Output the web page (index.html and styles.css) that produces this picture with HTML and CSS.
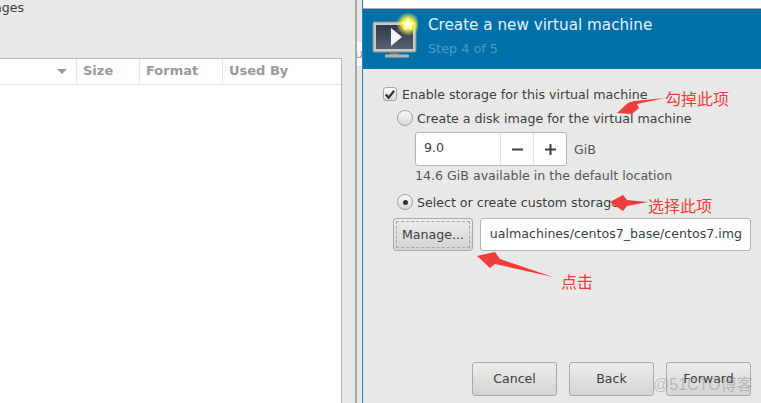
FILE: index.html
```html
<!DOCTYPE html>
<html lang="en">
<head>
    <meta charset="UTF-8">
    <title>Create a new virtual machine</title>
    <link rel="stylesheet" href="styles.css">
</head>
<body>
    <div class="screen">
        <!-- Storage volumes panel behind the dialog -->
        <div class="volumes">
            <div class="volumes-title">Images</div>
            <div class="table">
                <div class="table-head">
                    <div class="col col-name"><span class="sort-arrow"></span></div>
                    <div class="col col-size">Size</div>
                    <div class="col col-format">Format</div>
                    <div class="col col-used">Used By</div>
                </div>
            </div>
        </div>

        <div class="gap-strip">
            <div class="gap-cell">u</div>
        </div>

        <div class="dialog">
            <div class="dialog-top"></div>
            <div class="banner">
                <svg class="banner-icon" width="46" height="46" viewBox="0 0 46 46">
                    <defs>
                        <radialGradient id="glow">
                            <stop offset="0.45" stop-color="#f4f04a"/>
                            <stop offset="1" stop-color="#f4f04a" stop-opacity="0"/>
                        </radialGradient>
                        <linearGradient id="screenFill" x1="0" y1="0" x2="0" y2="1">
                            <stop offset="0" stop-color="#2f3a4b"/>
                            <stop offset="1" stop-color="#56606e"/>
                        </linearGradient>
                    </defs>
                    <rect x="1" y="10" width="43" height="30" rx="1.5" fill="#c9c9c6" stroke="#8f8f8c"/>
                    <rect x="4" y="13" width="37" height="24" fill="url(#screenFill)"/>
                    <path d="M19 16 L30 25 L19 34 Z" fill="#f4f4f2"/>
                    <rect x="18" y="40" width="9" height="3" fill="#777"/>
                    <rect x="13" y="42.5" width="24" height="3" rx="1" fill="#b5b5b2"/>
                    <circle cx="36" cy="12" r="12" fill="url(#glow)"/>
                    <path d="M36 5.5 L38 10 L42.6 10.5 L39.2 13.6 L40.2 18.2 L36 15.8 L31.8 18.2 L32.8 13.6 L29.4 10.5 L34 10 Z" fill="#fdfbd0"/>
                </svg>
                <div class="banner-text">
                    <div class="banner-title">Create a new virtual machine</div>
                    <div class="banner-step">Step 4 of 5</div>
                </div>
            </div>

            <div class="body">
                <label class="check-row">
                    <span class="checkbox">
                        <svg width="13" height="13" viewBox="0 0 13 13"><path d="M2 6.5 L5 10 L11 2.5" fill="none" stroke="#2e3436" stroke-width="2.4"/></svg>
                    </span>
                    Enable storage for this virtual machine
                </label>

                <div class="radio-row">
                    <span class="radio"></span>
                    Create a disk image for the virtual machine
                </div>

                <div class="size-row">
                    <div class="spin">
                        <div class="spin-value">9.0</div>
                        <div class="spin-btn">
                            <svg width="13" height="13" viewBox="0 0 13 13"><rect x="1" y="5.5" width="11" height="2" fill="#3a3f40"/></svg>
                        </div>
                        <div class="spin-btn">
                            <svg width="13" height="13" viewBox="0 0 13 13"><path d="M1 5.5h4.5V1h2v4.5H12v2H7.5V12h-2V7.5H1z" fill="#3a3f40"/></svg>
                        </div>
                    </div>
                    <span class="unit">GiB</span>
                </div>
                <div class="hint">14.6 GiB available in the default location</div>

                <div class="radio-row radio-row-custom">
                    <span class="radio radio-on"></span>
                    Select or create custom storage
                </div>

                <div class="path-row">
                    <button class="btn btn-manage"><span class="btn-focus">Manage...</span></button>
                    <div class="path-input">
                        <div class="path-clip"><span class="path-text">/var/lib/libvirt/images/virtualmachines/centos7_base/centos7.img</span></div>
                    </div>
                </div>
            </div>

            <div class="actions">
                <button class="btn">Cancel</button>
                <button class="btn">Back</button>
                <button class="btn">Forward</button>
            </div>
        </div>

        <!-- Hand drawn notes on top of the screenshot -->
        <svg class="arrows" width="761" height="403" viewBox="0 0 761 403">
            <path d="M665 98 L637 104 L639 108 L632 114 L617 113 L628 103 L634 101 Z" fill="#f03c3c"/>
            <path d="M648 202 L627 200 L623 195 L610 202 L623 211 L627 206 Z" fill="#f03c3c"/>
            <path d="M553 277 L500 259 L495 252 L477 256 L490 268 L495 264 Z" fill="#f03c3c"/>
        </svg>
        <div class="note note-uncheck">勾掉此项</div>
        <div class="note note-select">选择此项</div>
        <div class="note note-click">点击</div>
        <div class="watermark">@51CTO博客</div>
    </div>
</body>
</html>
```

FILE: styles.css
```css
/* General */
body {
    margin: 0;
    font-family: "DejaVu Sans", sans-serif;
    font-size: 12.6px;
    color: #3a3f41;
    background-color: #e8e8e7;
}

.screen {
    position: relative;
    display: flex;
    width: 761px;
    height: 403px;
    overflow: hidden;
}

/* Panel on the left */
.volumes {
    box-sizing: border-box;
    border-right: 2px solid #a9a9a7;
    width: 357px;
    height: 403px;
    padding-right: 13px;
    overflow: hidden;
    flex: none;
}

.volumes-title {
    margin-left: -22px;
    height: 58px;
    line-height: 14px;
    padding-top: 1px;
    box-sizing: border-box;
}

.table {
    height: 345px;
    background: white;
    border-top: 1px solid #b6b6b4;
    border-right: 1px solid #b6b6b4;
    box-sizing: border-box;
}

.table-head {
    display: flex;
    height: 25px;
    border-bottom: 1px solid #e3e3e2;
    color: #999;
    font-weight: bold;
    font-size: 13px;
    line-height: 24px;
}

.col {
    box-sizing: border-box;
    border-right: 1px solid #e8e8e7;
    padding-left: 6px;
}

.col-name {
    width: 77px;
    display: flex;
    justify-content: flex-end;
    align-items: center;
    padding-right: 9px;
}

.col-size {
    width: 63px;
}

.col-format {
    width: 83px;
}

.col-used {
    flex: 1;
    border-right: none;
}

.sort-arrow {
    width: 0;
    height: 0;
    border-left: 5px solid transparent;
    border-right: 5px solid transparent;
    border-top: 5px solid #999;
}

/* Strip between the panel and the dialog */
.gap-strip {
    width: 5px;
    flex: none;
    padding-top: 42px;
    border-right: 1px solid #1f86d6;
    overflow: hidden;
}

.gap-cell {
    height: 24px;
    background: white;
    border-bottom: 1px solid #e3e3e2;
    color: #999;
    line-height: 24px;
    margin-left: -7px;
    padding-left: 5px;
}

/* Dialog */
.dialog {
    flex: 1;
    display: flex;
    flex-direction: column;
    min-width: 0;
}

.dialog-top {
    height: 8px;
    background: white;
    border-bottom: 1px solid #b0b0ae;
}

.banner {
    display: flex;
    height: 60px;
    background-color: #0070a8;
    padding-left: 9px;
    padding-top: 3px;
    box-sizing: border-box;
    flex: none;
}

.banner-icon {
    flex: none;
}

.banner-text {
    margin-left: 10px;
    margin-top: 4px;
}

.banner-title {
    font-size: 15.2px;
    line-height: 18px;
    color: #e8f1f6;
}

.banner-step {
    margin-top: 7px;
    font-size: 12.8px;
    line-height: 16px;
    color: #4f9ccb;
}

.body {
    flex: 1;
    padding: 16px 10px 0 20px;
}

.check-row {
    display: flex;
    align-items: center;
    gap: 5px;
    height: 18px;
}

.checkbox {
    width: 14px;
    height: 14px;
    box-sizing: border-box;
    border: 1px solid #a5a5a3;
    border-radius: 3px;
    background: linear-gradient(#fafafa, #d8d8d7);
    display: flex;
    align-items: center;
    justify-content: center;
}

.radio-row {
    display: flex;
    align-items: center;
    gap: 4px;
    height: 18px;
    margin-top: 6px;
    margin-left: 14px;
}

.radio-row-custom {
    margin-top: 9px;
}

.radio {
    width: 16px;
    height: 16px;
    box-sizing: border-box;
    border: 1px solid #a0a09e;
    border-radius: 50%;
    background: linear-gradient(#fafafa, #d8d8d7);
    display: flex;
    align-items: center;
    justify-content: center;
}

.radio-on::after {
    content: "";
    width: 5px;
    height: 5px;
    border-radius: 50%;
    background: #2e3436;
}

.size-row {
    display: flex;
    align-items: center;
    gap: 7px;
    margin-top: 5px;
    margin-left: 32px;
}

.spin {
    display: flex;
    width: 152px;
    height: 34px;
    box-sizing: border-box;
    border: 1px solid #b5b5b3;
    border-radius: 3px;
    background: white;
}

.spin-value {
    flex: 1;
    padding-left: 8px;
    line-height: 30px;
}

.spin-btn {
    width: 32px;
    border-left: 1px solid #e3e3e2;
    display: flex;
    align-items: center;
    justify-content: center;
}

.unit {
    color: #50585a;
}

.hint {
    margin-top: 2px;
    margin-left: 32px;
    line-height: 16px;
    color: #50585a;
}

.path-row {
    display: flex;
    gap: 7px;
    margin-top: 7px;
    margin-left: 10px;
}

.btn {
    font-family: inherit;
    font-size: 12.6px;
    color: #3a3f41;
    width: 85px;
    height: 34px;
    padding: 0 0 2px;
    border: 1px solid #a9a9a7;
    border-radius: 3px;
    background: linear-gradient(#ececeb, #d4d4d3);
}

.btn-manage {
    width: 80px;
    height: 33px;
    padding: 2px;
}

.btn-focus {
    display: flex;
    height: 100%;
    align-items: center;
    justify-content: center;
    border: 1px dashed #a8a8a6;
    box-sizing: border-box;
}

.path-input {
    width: 271px;
    height: 33px;
    box-sizing: border-box;
    border: 1px solid #b5b5b3;
    border-radius: 3px;
    background: white;
    line-height: 30px;
    padding: 0 8px 0 9px;
}

.path-clip {
    display: flex;
    justify-content: flex-end;
    overflow: hidden;
    height: 100%;
    color: #3a3f41;
}

.path-text {
    white-space: nowrap;
    flex: none;
}

.actions {
    display: flex;
    justify-content: flex-end;
    gap: 12px;
    padding: 0 10px 7px 0;
}

/* Notes over the picture */
.arrows {
    position: absolute;
    left: 0;
    top: 0;
}

.note {
    position: absolute;
    font-family: "Noto Sans CJK SC", sans-serif;
    font-size: 16px;
    line-height: 20px;
    color: #f03c3c;
}

.note-uncheck {
    left: 665px;
    top: 88px;
}

.note-select {
    left: 648px;
    top: 195px;
}

.note-click {
    left: 561px;
    top: 271px;
}

.watermark {
    position: absolute;
    left: 653px;
    top: 376px;
    font-size: 16px;
    font-family: "Liberation Sans", "Noto Sans CJK SC", sans-serif;
    line-height: 18px;
    color: rgba(120, 120, 120, 0.38);
}
```
